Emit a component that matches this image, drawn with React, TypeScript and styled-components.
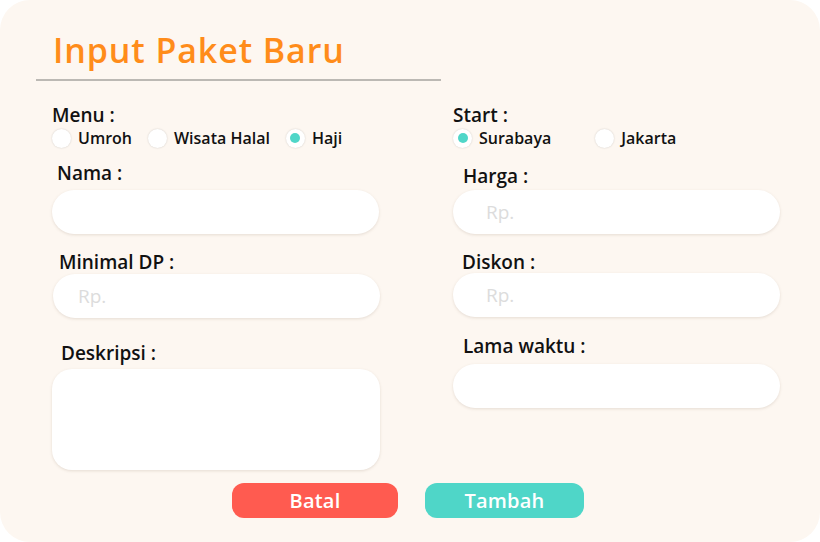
import React from "react";
import styled, { createGlobalStyle } from "styled-components";

const Global = createGlobalStyle`
  html, body { margin: 0; padding: 0; background: #ffffff; }
  body { font-family: "Open Sans", "Noto Sans", sans-serif; }
  * { box-sizing: border-box; }
`;

const Card = styled.div`
  width: 820px;
  height: 542px;
  background: #fdf7f1;
  border-radius: 30px;
  padding: 0 0 0 36px;
  display: flex;
  flex-direction: column;
`;

const Title = styled.h1`
  margin: 30px 0 0 17px;
  font-size: 34px;
  line-height: 40px;
  font-weight: 600;
  color: #ff8c1a;
  letter-spacing: 0.9px;
`;

const Divider = styled.hr`
  margin: 9px 0 0 0;
  width: 405px;
  border: none;
  height: 2px;
  background: #bcb9b4;
`;

const Columns = styled.div`
  display: grid;
  grid-template-columns: 328px 327px;
  column-gap: 73px;
  padding-left: 16px;
`;

const Column = styled.div`
  display: flex;
  flex-direction: column;
`;

const Label = styled.div<{ $top: number; $indent?: number }>`
  margin-top: ${(p) => p.$top}px;
  padding-left: ${(p) => p.$indent ?? 0}px;
  font-size: 19px;
  line-height: 22px;
  font-weight: 600;
  color: #111;
`;

const RadioRow = styled.div<{ $gap: number }>`
  display: flex;
  align-items: center;
  gap: ${(p) => p.$gap}px;
  margin-top: 1px;
  height: 22px;
`;

const RadioOption = styled.label`
  display: flex;
  align-items: center;
  gap: 7px;
  font-size: 16px;
  font-weight: 600;
  color: #111;
`;

const RadioDot = styled.span<{ $checked?: boolean }>`
  width: 19px;
  height: 19px;
  border-radius: 50%;
  background: #fff;
  box-shadow: 0 0 2px rgba(0, 0, 0, 0.18);
  display: flex;
  align-items: center;
  justify-content: center;
  &::after {
    content: "";
    width: 10px;
    height: 10px;
    border-radius: 50%;
    background: ${(p) => (p.$checked ? "#4fd6c8" : "transparent")};
  }
`;

const TextInput = styled.input<{ $top: number; $pad: number; $shift?: number }>`
  margin-top: ${(p) => p.$top}px;
  margin-left: ${(p) => p.$shift ?? 0}px;
  width: 327px;
  height: 44px;
  border: none;
  outline: none;
  border-radius: 22px;
  background: #fff;
  box-shadow: 0 1px 3px rgba(120, 100, 80, 0.18);
  padding: 0 0 0 ${(p) => p.$pad}px;
  font-family: inherit;
  font-size: 19px;
  font-weight: 500;
  &::placeholder { color: #dcdcdc; }
`;

const TextArea = styled.textarea`
  margin-top: 5px;
  width: 328px;
  height: 101px;
  border: none;
  outline: none;
  resize: none;
  border-radius: 20px;
  background: #fff;
  box-shadow: 0 1px 3px rgba(120, 100, 80, 0.18);
  font-family: inherit;
`;

const Buttons = styled.div`
  display: flex;
  gap: 27px;
  margin-top: 13px;
  padding-left: 196px;
`;

const Button = styled.button<{ $color: string; $w: number }>`
  width: ${(p) => p.$w}px;
  height: 35px;
  border: none;
  border-radius: 12px;
  background: ${(p) => p.$color};
  color: #fff;
  font-family: inherit;
  font-size: 20px;
  font-weight: 600;
  letter-spacing: 0.2px;
`;

export default function App() {
  return (
    <>
      <Global />
      <Card>
        <Title>Input Paket Baru</Title>
        <Divider />
        <Columns>
          <Column>
            <Label $top={23}>Menu :</Label>
            <RadioRow $gap={16}>
              <RadioOption><RadioDot />Umroh</RadioOption>
              <RadioOption><RadioDot />Wisata Halal</RadioOption>
              <RadioOption><RadioDot $checked />Haji</RadioOption>
            </RadioRow>
            <Label $top={13} $indent={5}>Nama :</Label>
            <TextInput $top={6} $pad={25} />
            <Label $top={17} $indent={7}>Minimal DP :</Label>
            <TextInput $top={1} $pad={25} $shift={1} placeholder="Rp." />
            <Label $top={24} $indent={9}>Deskripsi :</Label>
            <TextArea />
          </Column>
          <Column>
            <Label $top={23}>Start :</Label>
            <RadioRow $gap={44}>
              <RadioOption><RadioDot $checked />Surabaya</RadioOption>
              <RadioOption><RadioDot />Jakarta</RadioOption>
            </RadioRow>
            <Label $top={16} $indent={10}>Harga :</Label>
            <TextInput $top={3} $pad={33} placeholder="Rp." />
            <Label $top={17} $indent={9}>Diskon :</Label>
            <TextInput $top={0} $pad={33} placeholder="Rp." />
            <Label $top={18} $indent={10}>Lama waktu :</Label>
            <TextInput $top={7} $pad={33} />
          </Column>
        </Columns>
        <Buttons>
          <Button $color="#ff5b50" $w={166}>Batal</Button>
          <Button $color="#4fd6c8" $w={159}>Tambah</Button>
        </Buttons>
      </Card>
    </>
  );
}
